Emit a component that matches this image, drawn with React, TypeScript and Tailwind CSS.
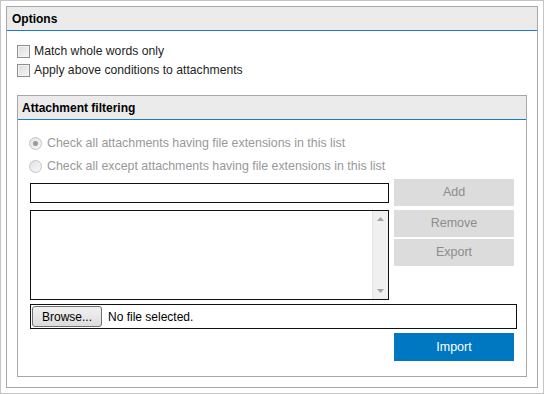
import React from "react";

function Checkbox() {
  return (
    <div className="w-[13px] h-[13px] border border-[#8e8f8f] bg-gradient-to-br from-[#dcdcdc] to-[#f7f7f7] shadow-[inset_0_0_0_1px_#f4f4f4]" />
  );
}

function Radio({ checked }: { checked?: boolean }) {
  return (
    <div className="w-[13px] h-[13px] rounded-full border border-[#c4c4c4] bg-gradient-to-br from-[#e2e2e2] to-[#f8f8f8] flex items-center justify-center">
      {checked && <div className="w-[5px] h-[5px] rounded-full bg-[#9a9a9a]" />}
    </div>
  );
}

function GrayButton({ label, className = "" }: { label: string; className?: string }) {
  return (
    <div className={`w-[120px] h-[27px] bg-[#dcdcdc] text-[#8c8c8c] text-[12.5px] flex items-center justify-center ${className}`}>
      {label}
    </div>
  );
}

export default function App() {
  return (
    <div className="w-[544px] h-[394px] border border-[#c4c4c4] p-[5px] bg-white text-[12px] text-[#1e1e1e] font-['Liberation_Sans',Arial,sans-serif]">
      <div className="h-full border border-[#a8a8a8] flex flex-col">
        <div className="h-[24px] shrink-0 bg-[#ebebeb] border-b border-[#1b7bc3] pl-[5px] font-bold text-black flex items-center">
          Options
        </div>

        <div className="px-[10px] pt-[11px]">
          <div className="h-[19px] flex items-center gap-[4px] text-[12.2px]">
            <Checkbox />
            <span>Match whole words only</span>
          </div>
          <div className="h-[19px] flex items-center gap-[4px] text-[12.2px]">
            <Checkbox />
            <span>Apply above conditions to attachments</span>
          </div>

          <div className="mt-[15px] h-[282px] border border-[#a8a8a8] flex flex-col">
            <div className="h-[24px] shrink-0 bg-[#ebebeb] border-b border-[#1b7bc3] pl-[4px] font-bold text-black flex items-center">
              Attachment filtering
            </div>

            <div className="px-[12px] pt-[12px]">
              <div className="h-[23px] -ml-px flex items-center gap-[5px] text-[#999999] text-[12.4px]">
                <Radio checked />
                <span>Check all attachments having file extensions in this list</span>
              </div>
              <div className="h-[23px] -ml-px flex items-center gap-[5px] text-[#999999] text-[12.4px]">
                <Radio />
                <span>Check all except attachments having file extensions in this list</span>
              </div>

              <div className="mt-px flex items-center gap-[5px]">
                <div className="w-[359px] h-[20px] border border-[#111111] bg-white" />
                <GrayButton label="Add" />
              </div>

              <div className="mt-[4px] flex items-start gap-[5px]">
                <div className="w-[359px] h-[90px] border border-[#111111] bg-white flex justify-end">
                  <div className="w-[16px] h-full bg-[#f0f0f0] border-l border-[#e4e4e4] flex flex-col items-center justify-between py-[6px]">
                    <svg width="7" height="4" viewBox="0 0 7 4">
                      <path d="M0 4 L3.5 0 L7 4 Z" fill="#a3a3a3" />
                    </svg>
                    <svg width="7" height="4" viewBox="0 0 7 4">
                      <path d="M0 0 L3.5 4 L7 0 Z" fill="#a3a3a3" />
                    </svg>
                  </div>
                </div>
                <div className="flex flex-col">
                  <GrayButton label="Remove" />
                  <GrayButton label="Export" className="mt-[2px]" />
                </div>
              </div>

              <div className="mt-[4px] w-[487px] h-[25px] border border-[#111111] flex items-center pl-px">
                <div className="w-[70px] h-[21px] rounded-[3px] border border-[#707070] bg-gradient-to-b from-[#f2f2f2] to-[#dcdcdc] text-black flex items-center justify-center">
                  Browse...
                </div>
                <span className="ml-[6px] text-black">No file selected.</span>
              </div>

              <div className="mt-[4px] ml-[364px] w-[120px] h-[28px] bg-[#0078c1] text-white text-[12.5px] flex items-center justify-center">
                Import
              </div>
            </div>
          </div>
        </div>
      </div>
    </div>
  );
}
